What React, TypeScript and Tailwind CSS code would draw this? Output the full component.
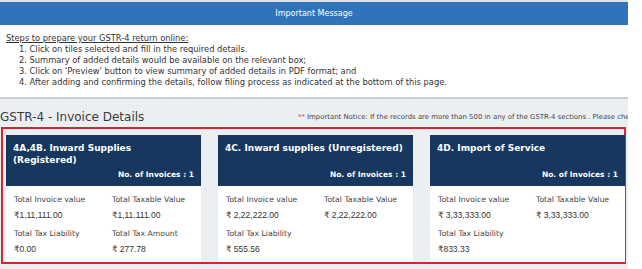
import React from 'react';

type Stat = { label: string; value: string };

interface TileProps {
  title: React.ReactNode;
  count: number;
  stats: Stat[];
}

const Tile: React.FC<TileProps> = ({ title, count, stats }) => (
  <div className="flex w-[195px] shrink-0 flex-col bg-white">
    <div className="flex h-[51px] flex-col justify-between bg-[#17375e] px-[7px] pt-[7px] pb-[6px] text-white">
      <div className="text-[9px] font-bold leading-[12px]">{title}</div>
      <div className="text-right text-[7.5px] font-bold leading-[10px]">No. of Invoices : {count}</div>
    </div>
    <div className="grid grid-cols-[98px_1fr] gap-y-[8px] px-[8px] pt-[9px]">
      {stats.map((s) => (
        <div key={s.label} className="flex flex-col gap-[5px]">
          <div className="text-[7.7px] leading-[10px] text-[#444]">{s.label}</div>
          <div className="font-['Liberation_Sans','DejaVu_Sans',sans-serif] text-[8.5px] leading-[11px] text-[#333]">
            {s.value}
          </div>
        </div>
      ))}
    </div>
  </div>
);

const steps = [
  'Click on tiles selected and fill in the required details.',
  'Summary of added details would be available on the relevant box;',
  "Click on 'Preview' button to view summary of added details in PDF format; and",
  'After adding and confirming the details, follow filing process as indicated at the bottom of this page.',
];

export default function App() {
  return (
    <div className="flex h-[269px] w-[642px] flex-col overflow-hidden bg-white font-['DejaVu_Sans',sans-serif] text-[#333]">
      <div className="w-[628px] border-t-2 border-[#dde1e5]">
        <div className="flex h-[23px] items-center justify-center bg-[#2f73ba] pt-[1px] text-[8px] text-white">
          Important Message
        </div>
        <div className="h-[74px] border-b-2 border-[#c9ced3] px-[6px] pt-[8px] text-[8.3px] leading-[11px]">
          <div className="underline">Steps to prepare your GSTR-4 return online:</div>
          <ol className="pl-[13px]">
            {steps.map((s, i) => (
              <li key={i}>
                {i + 1}. {s}
              </li>
            ))}
          </ol>
        </div>
      </div>

      <div className="flex w-[628px] flex-1 flex-col bg-[#eceff2]">
        <div className="flex h-[28px] items-center justify-between overflow-hidden whitespace-nowrap pt-[8px]">
          <div className="text-[12px] text-[#3a3a3a]">GSTR-4 - Invoice Details</div>
          <div className="w-[330px] overflow-hidden text-[6.9px] text-[#444]">
            <span className="text-[#e0302f]">**</span> Important Notice: If the records are more than 500 in any of
            the GSTR-4 sections . Please check
          </div>
        </div>
        <div className="ml-[1px] flex h-[137px] w-[625px] gap-[17px] border-2 border-[#d42530] pt-[6px] pl-[3px]">
          <Tile
            title={
              <>
                4A,4B. Inward Supplies
                <br />
                (Registered)
              </>
            }
            count={1}
            stats={[
              { label: 'Total Invoice value', value: '₹1,11,111.00' },
              { label: 'Total Taxable Value', value: '₹1,11,111.00' },
              { label: 'Total Tax Liability', value: '₹0.00' },
              { label: 'Total Tax Amount', value: '₹ 277.78' },
            ]}
          />
          <Tile
            title="4C. Inward supplies (Unregistered)"
            count={1}
            stats={[
              { label: 'Total Invoice value', value: '₹ 2,22,222.00' },
              { label: 'Total Taxable Value', value: '₹ 2,22,222.00' },
              { label: 'Total Tax Liability', value: '₹ 555.56' },
            ]}
          />
          <Tile
            title="4D. Import of Service"
            count={1}
            stats={[
              { label: 'Total Invoice value', value: '₹ 3,33,333.00' },
              { label: 'Total Taxable Value', value: '₹ 3,33,333.00' },
              { label: 'Total Tax Liability', value: '₹833.33' },
            ]}
          />
        </div>
      </div>
    </div>
  );
}
